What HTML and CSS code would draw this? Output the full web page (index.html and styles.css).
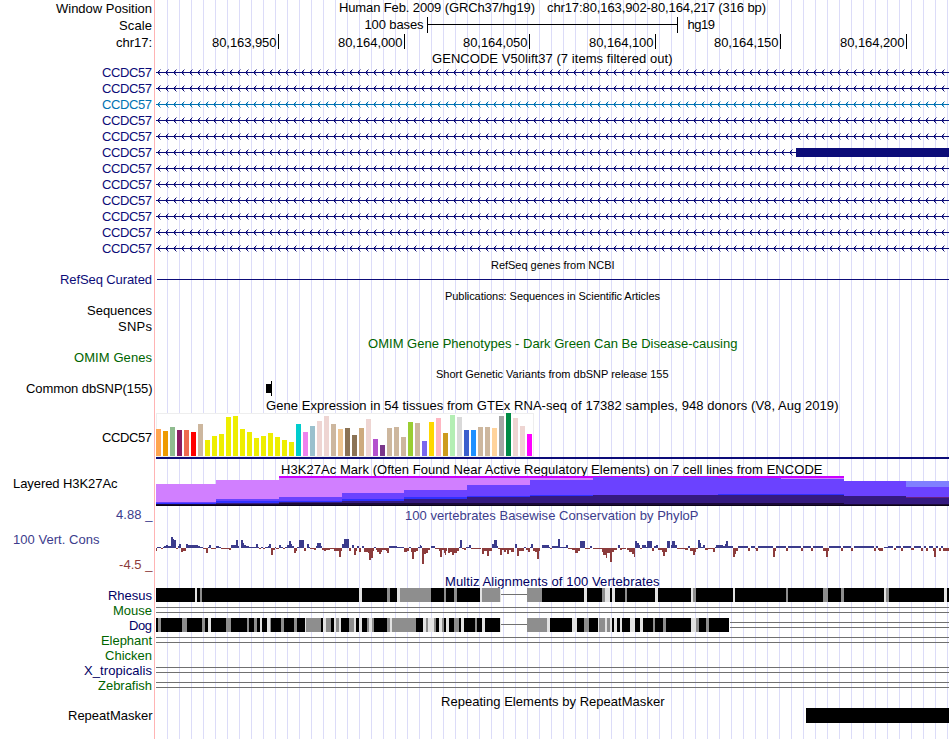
FILE: index.html
```
<!DOCTYPE html>
<html lang="en">
<head>
<meta charset="utf-8">
<title>chr17:80,163,902-80,164,217</title>
<link rel="stylesheet" href="styles.css">
</head>
<body>
<main class="browser" id="browser"></main>
<script src="tracks.js"></script>
</body>
</html>
```
FILE: styles.css
```
body { margin: 0; background: #fff; font-family: "Liberation Sans", Arial, sans-serif; font-size: 13px; color: #000; }
.browser {
  width: 949px; height: 739px; overflow: hidden;
  display: flex; flex-direction: column;
  background:
    linear-gradient(#ffb4b4, #ffb4b4) 154px 0 / 1px 100% no-repeat,
    repeating-linear-gradient(90deg, #dcdcf8 0 1px, transparent 1px 12px) 167px 0 / 100% 100% no-repeat;
}
.row { display: grid; grid-template-columns: 156px 793px; flex: none; }
.row svg { display: block; overflow: visible; grid-column: 2; grid-row: 1; }
.row .labels { display: block; grid-column: 1; grid-row: 1; }
text { font-size: 13px; white-space: pre; }
.small { font-size: 11px; }
.navy { fill: #0c0c78; }
.blue { fill: #0072b2; }
.green { fill: #006400; }
.cons { fill: #3c3c8c; }
.neg { fill: #8c3c3c; }
.multiz { fill: #000064; }
```
FILE: tracks.js
```
const NS = 'http://www.w3.org/2000/svg';
const root = document.getElementById('browser');
const LEFT = 156;

function el(name, attrs, parent) {
  const e = document.createElementNS(NS, name);
  for (const k in attrs) e.setAttribute(k, attrs[k]);
  parent.appendChild(e);
  return e;
}
// One horizontal strip: a label cell and a drawing cell, both in local y.
function row(h) {
  const div = document.createElement('div');
  div.className = 'row';
  root.appendChild(div);
  const labels = el('svg', { class: 'labels', width: 156, height: h }, div);
  const track = el('svg', { width: 793, height: h, viewBox: `${LEFT} 0 793 ${h}` }, div);
  return { labels, track };
}
function text(p, s, x0, x1, y, cls) {
  const t = el('text', { x: x0, y, textLength: x1 - x0, class: cls || '' }, p);
  t.textContent = s;
}
function rect(p, x, y, w, h, fill) {
  el('rect', { x, y, width: w, height: h, fill, 'shape-rendering': 'crispEdges' }, p);
}
function title(h, s, x0, x1, y, cls) { text(row(h).track, s, x0, x1, y, cls); }

// Position header
let r = row(16);
text(r.labels, 'Window Position', 56, 152, 13);
text(r.track, 'Human Feb. 2009 (GRCh37/hg19)', 339, 535, 12);
text(r.track, 'chr17:80,163,902-80,164,217 (316 bp)', 547, 766, 12);
r = row(18);
text(r.labels, 'Scale', 119, 152, 14);
text(r.track, '100 bases', 364.5, 423.5, 13);
rect(r.track, 427, 1, 1, 16, '#000');
rect(r.track, 427, 8, 251, 1, '#000');
rect(r.track, 677, 1, 1, 16, '#000');
text(r.track, 'hg19', 687.5, 715, 13);
r = row(17);
text(r.labels, 'chr17:', 116, 152, 13);
[['80,163,950', 278], ['80,164,000', 404], ['80,164,050', 529], ['80,164,100', 655], ['80,164,150', 780], ['80,164,200', 906]]
  .forEach(([s, x]) => { text(r.track, s, x - 66, x - 1.5, 13); rect(r.track, x, 0, 1, 15, '#000'); });

// Genes
title(13, 'GENCODE V50lift37 (7 items filtered out)', 432, 672.5, 12);
for (let i = 0; i < 12; i++) {
  r = row(16);
  const c = i === 2 ? '#0072b2' : '#0c0c78';
  text(r.labels, 'CCDC57', 102, 152, 13, i === 2 ? 'blue' : 'navy');
  const end = i === 5 ? 796 : 949;
  rect(r.track, 156, 8, end - 156, 1, c);
  // Strand arrows, one pixel per step, fading at the outer ends
  let d = '', soft = '';
  for (let x = 157; x < end - 1; x += 8) {
    d += `M${x + 1} 7h1v1h-1zM${x + 1} 9h1v1h-1zM${x + 2} 6h1v1h-1zM${x + 2} 10h1v1h-1z`;
    soft += `M${x + 3} 5h1v1h-1zM${x + 3} 11h1v1h-1zM${x + 2} 7h1v1h-1zM${x + 2} 9h1v1h-1z`;
  }
  el('path', { d, fill: c }, r.track);
  el('path', { d: soft, fill: c, opacity: .45 }, r.track);
  if (i === 5) rect(r.track, 796, 4, 153, 9, c);
}
title(16, 'RefSeq genes from NCBI', 491, 614.5, 13, 'small');
r = row(16);
text(r.labels, 'RefSeq Curated', 60, 152, 12, 'navy');
rect(r.track, 157, 7, 792, 1, '#0c0c78');
title(15, 'Publications: Sequences in Scientific Articles', 445, 660, 12, 'small');
r = row(15); text(r.labels, 'Sequences', 87, 152, 12);
r = row(17); text(r.labels, 'SNPs', 118, 152, 13);
title(15, 'OMIM Gene Phenotypes - Dark Green Can Be Disease-causing', 368, 737.5, 13, 'green');
r = row(16); text(r.labels, 'OMIM Genes', 74, 152, 12, 'green');
title(15, 'Short Genetic Variants from dbSNP release 155', 436, 668.5, 12, 'small');
r = row(16);
text(r.labels, 'Common dbSNP(155)', 26, 152.5, 12);
rect(r.track, 266, 3, 5, 9, '#000');
rect(r.track, 271, 0, 1, 15, '#000');
title(16, 'Gene Expression in 54 tissues from GTEx RNA-seq of 17382 samples, 948 donors (V8, Aug 2019)', 266, 838.5, 13);

// Tissue expression: bar top (page y) and colour
r = row(48);
text(r.labels, 'CCDC57', 102, 152, 29);
rect(r.track, 156, 0, 378, 44, '#eee');
rect(r.track, 157, 1, 376, 42, '#fff');
const tops = [429,431,427,430,430,432,424,440,436,434,417,416,429,432,438,436,433,437,440,442,424,432,426,421,416,424,429,428,435,428,419,439,445,428,427,437,422,423,441,422,418,433,415,417,430,430,427,427,428,416,413,418,426,434];
const Y = '#eeee00', T = '#cdb79e', P = '#eed5d2';
const cols = ['#ffa54f','#ee9a00','#8fbc8f','#8b1c62','#ee6a50','#ff0000',T,Y,Y,Y,Y,Y,Y,Y,Y,Y,Y,Y,Y,Y,'#00cdcd','#ee82ee','#9ac0cd',P,P,T,'#eec591','#8b7355','#8b7355','#cdaa7d',P,'#b452cd','#7a378b',T,T,T,'#9acd32',T,'#7a67ee','#ffd700','#ffb6c1','#cd9b1d','#b4eeb4','#d9d9d9','#3a5fcd','#1e90ff',T,T,'#ffd39b','#a6a6a6','#008b45',P,P,'#ff00ff'];
tops.forEach((t, i) => rect(r.track, 156 + i * 7, t - 413, 5, 456 - t, cols[i]));
rect(r.track, 156, 44, 793, 2, '#0c0c78');

// Histone mark: layered steps [x0, x1, top]
title(15, 'H3K27Ac Mark (Often Found Near Active Regulatory Elements) on 7 cell lines from ENCODE', 281, 822.5, 13);
r = row(30);
text(r.labels, 'Layered H3K27Ac', 13, 117.5, 12);
function steps(fill, list) { list.forEach(([a, b, t]) => rect(r.track, a, t - 476, b - a, 506 - t, fill)); }
steps('#d17fff', [[156,216,484],[216,279,480],[279,844,477]]);
rect(r.track, 279, 0, 565, 2, '#cc00ff');
steps('#8080ff', [[906,949,481]]);
steps('#6b42ff', [[156,216,502],[216,279,499],[279,342,497],[342,404,493],[404,467,490],[467,530,485],[530,593,480],[593,718,477],[718,781,478],[781,844,479],[844,906,481],[906,949,487]]);
steps('#3030ff', [[156,216,503],[216,279,501],[279,342,501],[342,404,499],[404,467,497],[467,530,496],[530,593,495],[718,844,494]]);
steps('#6b2080', [[906,949,497]]);
steps('#351a80', [[156,216,504],[216,279,503],[279,342,502],[342,404,501],[404,467,499],[467,530,497],[530,593,496],[593,718,495],[718,844,495],[844,906,496],[906,949,498]]);
steps('#1a0a38', [[156,279,504],[279,530,503],[530,844,503],[844,949,504]]);
rect(r.track, 156, 29, 793, 1, '#0c0418');

// Conservation: [start, end, height] in thirds of a pixel; negative is below the axis
title(17, '100 vertebrates Basewise Conservation by PhyloP', 405, 698.5, 14, 'cons');
r = row(50);
text(r.labels, '4.88 _', 116, 152.5, -4, 'cons');
text(r.labels, '100 Vert. Cons', 13, 99.5, 21, 'cons');
text(r.labels, '-4.5 _', 119, 152.5, 46, 'neg');
const phylo = {
150: '18 21 -3,21 33 1,33 39 -1,39 42 1,42 48 2,48 54 3,54 63 2,63 69 11,69 72 9,72 78 8,78 84 -1,84 87 2,87 93 4,93 99 -4,99 108 -3,108 114 4,114 144 3,144 150 2,150 160 1,160 168 -1,168 174 -5,174 177 1,177 183 3,183 198 -1,198 207 2,207 213 1,213 237 -1,237 243 -2,243 258 3,258 264 8,264 267 2,273 279 8,279 282 5,282 288 3,288 297 2,297 318 1,318 324 4,324 327 1,327 333 -1,333 339 1,339 345 -1,345 354 1,354 357 2,357 363 4,363 369 -7,369 375 -2,375 378 1,378 387 -1,387 393 3,393 399 1,399 405 -1,405 411 1,411 417 3,417 423 7,423 426 4,426 432 2,432 438 -5,438 441 -3,441 447 1,447 462 8,462 468 -3,471 477 4,477 480 1,480 492 -1,492 498 -2,498 501 2,501 513 5,513 516 2,516 522 -2,522 528 -3,528 540 -2,540 552 -1,552 567 -3,567 573 -9,573 576 -3,576 582 4,582 597 9,597 603 -3,606 612 3,612 618 -7,618 621 -3,621 627 2,627 633 -4,636 642 2,642 654 -4,654 657 -5,657 663 -12,663 669 -10,669 672 -3,672 678 1,678 681 -2,681 687 -4,687 693 -6,693 696 -4,696 708 -2,708 711 -3,711 717 -5,717 741 2,741 762 1,762 771 -4,771 777 -3,777 783 1',
410: '3 6 -4,6 12 -11,12 18 -4,18 24 -3,24 30 1,30 33 3,33 36 2,36 42 -16,42 48 -6,48 54 -5,54 60 -2,64 74 2,74 87 -1,87 90 -3,90 96 -9,96 102 -2,102 105 -5,105 108 -7,108 111 -3,114 120 -5,120 126 -4,126 132 -7,132 141 -5,141 147 -3,147 150 1,150 156 8,156 162 -1,162 168 -2,168 177 1,177 183 3,183 213 -1,216 222 -6,222 231 -3,231 237 -8,237 246 -3,246 252 4,252 261 8,261 264 2,264 270 -1,270 276 -7,276 282 -2,282 288 -4,288 291 -2,291 297 -6,297 303 -2,303 312 -4,315 321 4,321 327 -8,327 342 -3,342 348 1,348 354 -2,354 360 -4,360 363 1,363 369 4,369 375 -3,375 381 -4,381 387 -11,387 390 -3,396 417 3,417 420 1,420 426 -1,426 444 2,444 450 9,450 468 1,468 474 3,474 486 -1,486 495 -2,495 504 -5,504 510 -3,510 525 7,525 540 -1,540 546 2,549 576 -1,576 579 -4,579 588 -7,588 591 -10,591 600 -5,600 606 -14,606 612 -4,612 621 -2,624 630 3,630 636 -2,636 648 -1,651 657 -2,657 666 -4,666 672 -6,672 675 -9,675 681 7,681 687 5,687 690 3,690 696 -1,696 708 3,708 711 1,711 726 7,726 732 -3,732 738 2,738 744 3,744 756 -2,756 759 -4,759 765 -8,765 771 -4,771 780 7,783 786 3,786 795 7,795 801 3,801 810 -1',
680: '0 15 -1,15 24 -2,24 30 2,30 39 -3,39 45 -7,45 48 -4,48 54 -1,54 60 8,60 63 5,63 69 1,69 75 3,75 84 -2,84 99 -1,99 105 -4,105 108 1,108 129 3,129 135 2,135 138 4,138 144 7,144 159 2,159 165 -9,165 168 -6,168 174 -3,174 204 2,204 210 -3,213 225 2,225 228 -1,228 234 -3,234 279 2,279 285 -9,285 288 -3,288 318 2,318 324 -3,324 363 2,363 369 -3,369 393 2,393 399 -3,399 429 2,429 438 -3,438 444 -9,444 447 -3,447 483 2,483 489 -3,489 513 2,513 519 -3,522 582 2,582 588 -3,588 594 2,594 597 -2,597 609 -3,612 624 1,624 639 2,642 648 -2,648 663 2,663 669 -3,669 693 2,693 702 -2,702 723 2,723 729 -3,732 738 2,738 744 -3,747 759 2,759 762 -3,762 768 -9,768 774 2,777 783 -3,783 789 2,789 807 -3'
};
// Axis is at page y 548; this strip starts at 523.
for (const origin in phylo) phylo[origin].split(',').forEach(s => {
  const [a, b, h] = s.split(' ').map(Number);
  const x = Math.round(+origin + a / 3), w = Math.round(+origin + b / 3) - x;
  if (h > 0) rect(r.track, x, 25 - h, w, h, '#3c3c8c');
  else rect(r.track, x, 25, w, -h, '#8c3c3c');
});

// Alignments: black base with g (grey), l (light) and k (black) spans
title(15, 'Multiz Alignments of 100 Vertebrates', 445, 659.5, 13, 'multiz');
const fills = { g: '#8e8e8e', l: '#e2e2e2', k: '#000' };
const rhesus = {
150: 'l 135 141,g 150 156,l 627 636,g 711 720,l 741 750,g 750 810',
410: 'g 0 63,g 102 108,g 132 141,l 210 216,g 216 270,l 270 273,g 351 396,l 522 531,g 576 585,l 585 600,l 606 615,g 645 651,l 735 744',
680: 'l 33 39,g 39 48,l 159 165,g 318 324,g 429 444,g 483 492,l 612 618,g 618 627,l 792 801'
};
const dog = {
150: 'g 24 33,g 96 111,g 156 165,l 174 183,g 228 243,g 291 297,g 312 321,l 330 336,l 351 360,g 360 363,g 393 402,g 432 441,l 465 468,g 468 513,l 519 528,g 528 543,l 552 558,g 558 567,l 567 573,g 597 612,l 612 618,l 627 636,g 651 657,l 657 666,g 666 672,g 711 720,l 720 726,g 726 798',
410: 'g 0 18,l 39 48,g 48 54,l 54 72,g 72 78,l 87 96,g 96 102,l 108 117,g 132 147,l 153 162,g 195 201,l 216 225,l 270 273,g 351 411,l 411 420,l 486 501,g 522 537,l 564 567,g 567 585,l 585 591,g 591 600,l 600 606,l 612 621,l 630 636,l 660 675,l 690 699,g 729 735,g 759 768',
680: 'l 33 48,g 48 57,g 78 87'
};
function align(data, end) {
  rect(r.track, 156, 0, 344, 14, '#000');
  rect(r.track, 501, 6, 26, 1, '#707070');
  rect(r.track, 527, 0, end - 527, 14, '#000');
  for (const o in data) data[o].split(',').forEach(s => {
    const [c, a, b] = s.split(' ');
    rect(r.track, +o + a / 3, 0, (b - a) / 3, 14, fills[c]);
  });
}
function gap(x, y) { rect(r.track, x, y, 949 - x, 1, '#707070'); rect(r.track, x, y + 5, 949 - x, 1, '#707070'); }
[['Rhesus', 108, 'multiz'], ['Mouse', 113, 'green'], ['Dog', 129, 'multiz'], ['Elephant', 101, 'green'], ['Chicken', 105, 'green'], ['X_tropicalis', 84, 'multiz'], ['Zebrafish', 98, 'green']]
  .forEach(([name, x, cls], i) => {
    r = row(15);
    text(r.labels, name, x, 152, 12, cls);
    if (i === 0) align(rhesus, 949);
    else if (i === 2) { align(dog, 729); gap(730, 4); }
    else if (i !== 4) gap(156, 4);
  });

title(15, 'Repeating Elements by RepeatMasker', 441, 664.5, 13);
r = row(31);
text(r.labels, 'RepeatMasker', 68, 152.5, 12);
rect(r.track, 806, 0, 143, 15, '#000');
```
